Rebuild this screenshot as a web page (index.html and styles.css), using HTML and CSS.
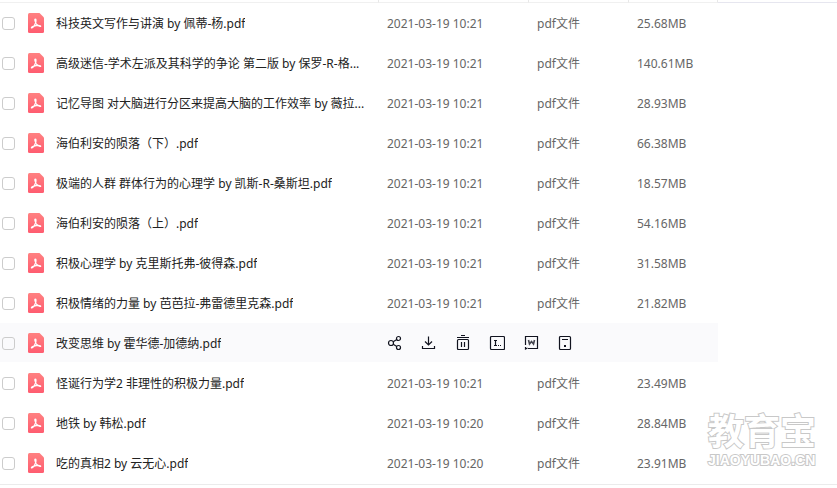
FILE: index.html
```html
<!DOCTYPE html>
<html lang="zh-CN">
<head>
  <meta charset="UTF-8" />
  <title>文件列表</title>
  <link rel="stylesheet" href="styles.css">
</head>
<body>
  <svg class="sprite" width="0" height="0" aria-hidden="true">
    <defs>
      <linearGradient id="pdfRed" x1="0" y1="0" x2="0" y2="1">
        <stop offset="0" stop-color="#ff8181" />
        <stop offset="1" stop-color="#ff5c70" />
      </linearGradient>
      <symbol id="pdf" viewBox="0 0 16 20">
        <path fill="url(#pdfRed)" d="M1.500 0H11.500L16 4.500V18.500Q16 20 14.500 20H1.500Q0 20 0 18.500V1.500Q0 0 1.500 0Z" />
        <path fill="none" stroke="#fff" stroke-width="1.200" stroke-linecap="round" stroke-linejoin="round" d="M7 6.200C8.300 5.500 8.200 8.200 7.500 10C6.500 12.500 5 15 3.500 15C2.800 14.200 5.500 13 8 12.600C10.500 12.200 12.800 12.500 12.700 13.200C12.300 14.200 9.500 12.600 8.400 11C7.400 9.300 6.500 6.900 7 6.200Z" />
      </symbol>
    </defs>
  </svg>

  <main class="file-panel">
    <table class="file-table">
      <colgroup>
        <col class="col-name">
        <col class="col-date">
        <col class="col-type">
        <col class="col-size">
      </colgroup>
      <thead>
        <tr><th></th><th></th><th></th><th></th></tr>
      </thead>
      <tbody>
        <tr>
          <td><label class="file"><input type="checkbox"><svg class="file-icon"><use href="#pdf" /></svg><span class="file-name">科技英文写作与讲演 by 佩蒂-杨.pdf</span></label></td>
          <td>2021-03-19 10:21</td><td>pdf文件</td><td>25.68MB</td>
        </tr>
        <tr>
          <td><label class="file"><input type="checkbox"><svg class="file-icon"><use href="#pdf" /></svg><span class="file-name">高级迷信-学术左派及其科学的争论 第二版 by 保罗-R-格...</span></label></td>
          <td>2021-03-19 10:21</td><td>pdf文件</td><td>140.61MB</td>
        </tr>
        <tr>
          <td><label class="file"><input type="checkbox"><svg class="file-icon"><use href="#pdf" /></svg><span class="file-name">记忆导图 对大脑进行分区来提高大脑的工作效率 by 薇拉...</span></label></td>
          <td>2021-03-19 10:21</td><td>pdf文件</td><td>28.93MB</td>
        </tr>
        <tr>
          <td><label class="file"><input type="checkbox"><svg class="file-icon"><use href="#pdf" /></svg><span class="file-name">海伯利安的陨落（下）.pdf</span></label></td>
          <td>2021-03-19 10:21</td><td>pdf文件</td><td>66.38MB</td>
        </tr>
        <tr>
          <td><label class="file"><input type="checkbox"><svg class="file-icon"><use href="#pdf" /></svg><span class="file-name">极端的人群 群体行为的心理学 by 凯斯-R-桑斯坦.pdf</span></label></td>
          <td>2021-03-19 10:21</td><td>pdf文件</td><td>18.57MB</td>
        </tr>
        <tr>
          <td><label class="file"><input type="checkbox"><svg class="file-icon"><use href="#pdf" /></svg><span class="file-name">海伯利安的陨落（上）.pdf</span></label></td>
          <td>2021-03-19 10:21</td><td>pdf文件</td><td>54.16MB</td>
        </tr>
        <tr>
          <td><label class="file"><input type="checkbox"><svg class="file-icon"><use href="#pdf" /></svg><span class="file-name">积极心理学 by 克里斯托弗-彼得森.pdf</span></label></td>
          <td>2021-03-19 10:21</td><td>pdf文件</td><td>31.58MB</td>
        </tr>
        <tr>
          <td><label class="file"><input type="checkbox"><svg class="file-icon"><use href="#pdf" /></svg><span class="file-name">积极情绪的力量 by 芭芭拉-弗雷德里克森.pdf</span></label></td>
          <td>2021-03-19 10:21</td><td>pdf文件</td><td>21.82MB</td>
        </tr>
        <tr class="active">
          <td><label class="file"><input type="checkbox"><svg class="file-icon"><use href="#pdf" /></svg><span class="file-name">改变思维 by 霍华德-加德纳.pdf</span></label></td>
          <td colspan="3">
            <div class="actions">
              <button type="button" aria-label="分享">
                <svg viewBox="0 0 16 16"><circle cx="4" cy="8" r="2.500" /><circle cx="11.500" cy="3.500" r="2" /><circle cx="11.500" cy="12.500" r="2" /><path d="M6.200 6.700L9.800 4.500M6.200 9.300L9.800 11.500" /></svg>
              </button>
              <button type="button" aria-label="下载">
                <svg viewBox="0 0 16 16"><path d="M7.500 1.500V9.500M4 6.500L7.500 10L11 6.500M1.500 11V13.500H13.500V11" /></svg>
              </button>
              <button type="button" aria-label="删除">
                <svg viewBox="0 0 16 16"><path d="M6 .5H10M2 2.500H14M3.500 4.500H12.500Q13.500 4.500 13.500 5.500V13.500Q13.500 14.500 12.500 14.500H3.500Q2.500 14.500 2.500 13.500V5.500Q2.500 4.500 3.500 4.500ZM6.500 7V12M9.500 7V12" /></svg>
              </button>
              <button type="button" aria-label="重命名">
                <svg viewBox="0 0 16 16"><rect x="1.500" y="1.500" width="14" height="13" rx="1" /><path d="M5 5.500H8M6.500 5.500V10.500M5 10.500H8M9 10.500H10M11 10.500H12" /></svg>
              </button>
              <button type="button" aria-label="转为Word">
                <svg viewBox="0 0 16 16"><path d="M2.500 10V1.500H14.500V13.500H5M2.500 12V14L4.500 13" /><path class="thick" d="M5.500 5L6.500 9L8.500 6.500L10.500 9L11.500 5" /></svg>
              </button>
              <button type="button" aria-label="移动">
                <svg viewBox="0 0 16 16"><rect x="2.500" y="1.500" width="11" height="13" rx="1" /><path d="M5 4.500H11M7 10.500H9M7 11.500H9" /></svg>
              </button>
            </div>
          </td>
        </tr>
        <tr>
          <td><label class="file"><input type="checkbox"><svg class="file-icon"><use href="#pdf" /></svg><span class="file-name">怪诞行为学2 非理性的积极力量.pdf</span></label></td>
          <td>2021-03-19 10:21</td><td>pdf文件</td><td>23.49MB</td>
        </tr>
        <tr>
          <td><label class="file"><input type="checkbox"><svg class="file-icon"><use href="#pdf" /></svg><span class="file-name">地铁 by 韩松.pdf</span></label></td>
          <td>2021-03-19 10:20</td><td>pdf文件</td><td>28.84MB</td>
        </tr>
        <tr>
          <td><label class="file"><input type="checkbox"><svg class="file-icon"><use href="#pdf" /></svg><span class="file-name">吃的真相2 by 云无心.pdf</span></label></td>
          <td>2021-03-19 10:20</td><td>pdf文件</td><td>23.91MB</td>
        </tr>
      </tbody>
    </table>
    <aside class="side"></aside>
    <div class="watermark">
      <div class="watermark-name">教育宝</div>
      <div class="watermark-site">JIAOYUBAO.CN</div>
    </div>
  </main>
</body>
</html>
```
FILE: styles.css
```css
* { box-sizing: border-box; }
body {
  margin: 0;
  background: #fff;
  color: #666;
  font-family: "Noto Sans", "Noto Sans CJK SC", sans-serif;
  font-size: 12px;
  line-height: 20px;
}
.sprite { position: absolute; }
.file-panel {
  position: relative;
  display: flex;
  padding-bottom: 1px;
  border-bottom: 1px solid #ebebeb;
}
.file-table {
  flex: 1;
  min-width: 0;
  table-layout: fixed;
  border-collapse: separate;
  border-spacing: 0;
}
.col-date { width: 150px; }
.col-type { width: 100px; }
.col-size { width: 90px; }
th {
  height: 3px;
  padding: 0;
  border-left: 1px solid #e8e8e8;
  border-bottom: 1px solid #f0f0f0;
}
th:first-child { border-left: 0; }
th:last-child { border-right: 1px solid #e8e8e8; }
td {
  height: 40px;
  padding: 2px 9px 0;
  white-space: nowrap;
}
td:first-child { padding: 0 0 0 2px; }
tr.active td {
  padding-top: 1px;
  background: #fafafc;
  border-bottom: 1px solid #fff;
}
.file {
  display: flex;
  align-items: center;
}
.file input {
  appearance: none;
  width: 13px;
  height: 13px;
  margin: 0 13px 0 0;
  border: 1px solid #ccc;
  border-radius: 3px;
  background: #fff;
}
tr.active input { background: #fafafc; }
.file-icon {
  flex: none;
  width: 16px;
  height: 20px;
  margin-right: 12px;
}
.file-name {
  padding-top: 1px;
  color: #222;
  overflow: hidden;
  text-overflow: ellipsis;
}
.actions {
  display: flex;
  gap: 18px;
}
.actions button {
  width: 16px;
  height: 16px;
  padding: 0;
  border: 0;
  background: none;
  cursor: pointer;
}
.actions svg {
  display: block;
  width: 16px;
  height: 16px;
  fill: none;
  stroke: #11131f;
  stroke-width: 1.2;
}
.actions .thick {
  stroke: #44454f;
  stroke-width: 1.6;
}
.side {
  width: 119px;
  margin-top: 2px;
  border-top: 1px solid #e6e6ef;
}
.watermark {
  position: absolute;
  right: 21px;
  bottom: 15px;
  color: #fff;
  font-weight: bold;
  -webkit-text-stroke: 2px #c8c8c8;
  paint-order: stroke fill;
  pointer-events: none;
}
.watermark-name {
  font-family: "Liberation Sans", "Noto Sans CJK SC", sans-serif;
  font-size: 36px;
  line-height: 36px;
}
.watermark-site {
  font-family: "Liberation Sans", sans-serif;
  font-size: 14px;
  line-height: 18px;
}
```
